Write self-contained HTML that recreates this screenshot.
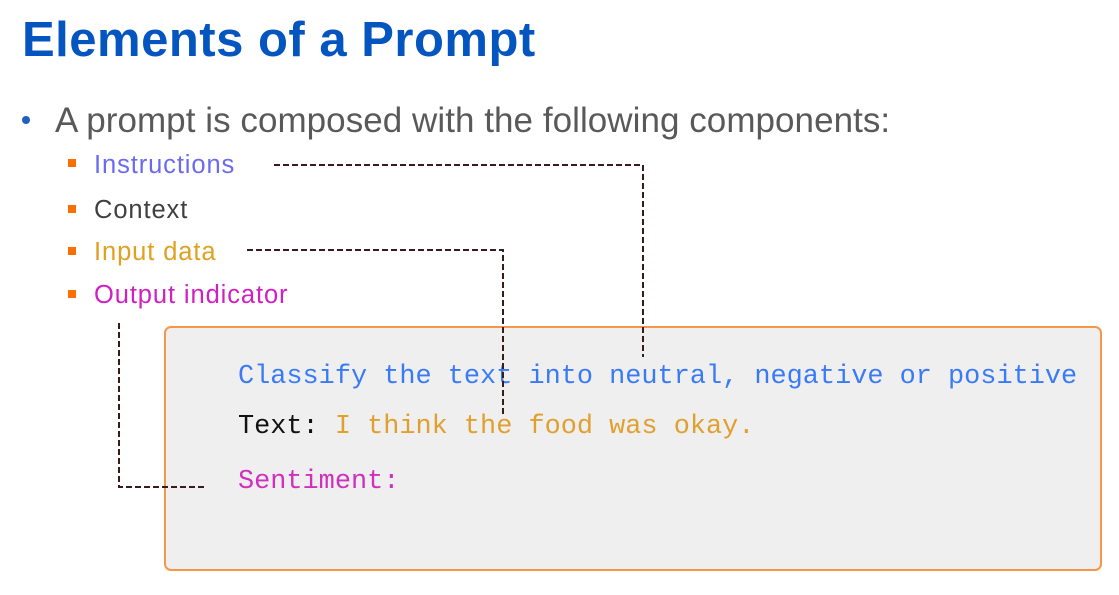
<!DOCTYPE html>
<html><head><meta charset="utf-8"><style>
body{margin:0;width:1119px;height:595px;background:#fff;position:relative;overflow:hidden;font-family:"Liberation Sans",sans-serif}
.a{position:absolute;white-space:nowrap}
.t{left:22px;top:12px;font-size:49px;font-weight:bold;color:#0455BF;letter-spacing:0.5px}
.b{left:55px;top:101px;font-size:35px;color:#595959;letter-spacing:0.05px}
.dot{left:22px;top:116px;width:8px;height:8px;border-radius:50%;background:#1F5FBF}
.sq{width:8px;height:8px;background:#F96F00;left:68px}
.s{left:94px;font-size:25.5px;letter-spacing:0.9px}
.box{position:absolute;left:164px;top:326px;width:934px;height:241px;border:2px solid #F79646;border-radius:7px;background:#EFEFEF}
.m{font-family:"Liberation Mono",monospace;font-size:26.9px;left:238px}
</style></head><body>
<div class="a t">Elements of a Prompt</div>
<div class="a dot"></div>
<div class="a b">A prompt is composed with the following components:</div>
<div class="a sq" style="top:159px"></div><div class="a s" style="top:151px;color:#6B6BF0">Instructions</div>
<div class="a sq" style="top:205px"></div><div class="a s" style="top:196px;color:#404040">Context</div>
<div class="a sq" style="top:247px"></div><div class="a s" style="top:238px;color:#E0A020">Input data</div>
<div class="a sq" style="top:290px"></div><div class="a s" style="top:281px;color:#D020C0">Output indicator</div>
<div class="box"></div>
<div class="a m" style="top:362px;color:#3A7BF5">Classify the text into neutral, negative or positive</div>
<div class="a m" style="top:412px;color:#E0A030"><span style="color:#111">Text:</span> I think the food was okay.</div>
<div class="a m" style="top:467px;color:#D030C0">Sentiment:</div>
<svg class="a" style="left:0;top:0" width="1119" height="595"><g fill="none" stroke="#3A1A1A" stroke-width="2" stroke-dasharray="6 3">
<path d="M274 165H643V357"/><path d="M247 250H503V414"/><path d="M119 323V487H204"/></g></svg>
</body></html>
